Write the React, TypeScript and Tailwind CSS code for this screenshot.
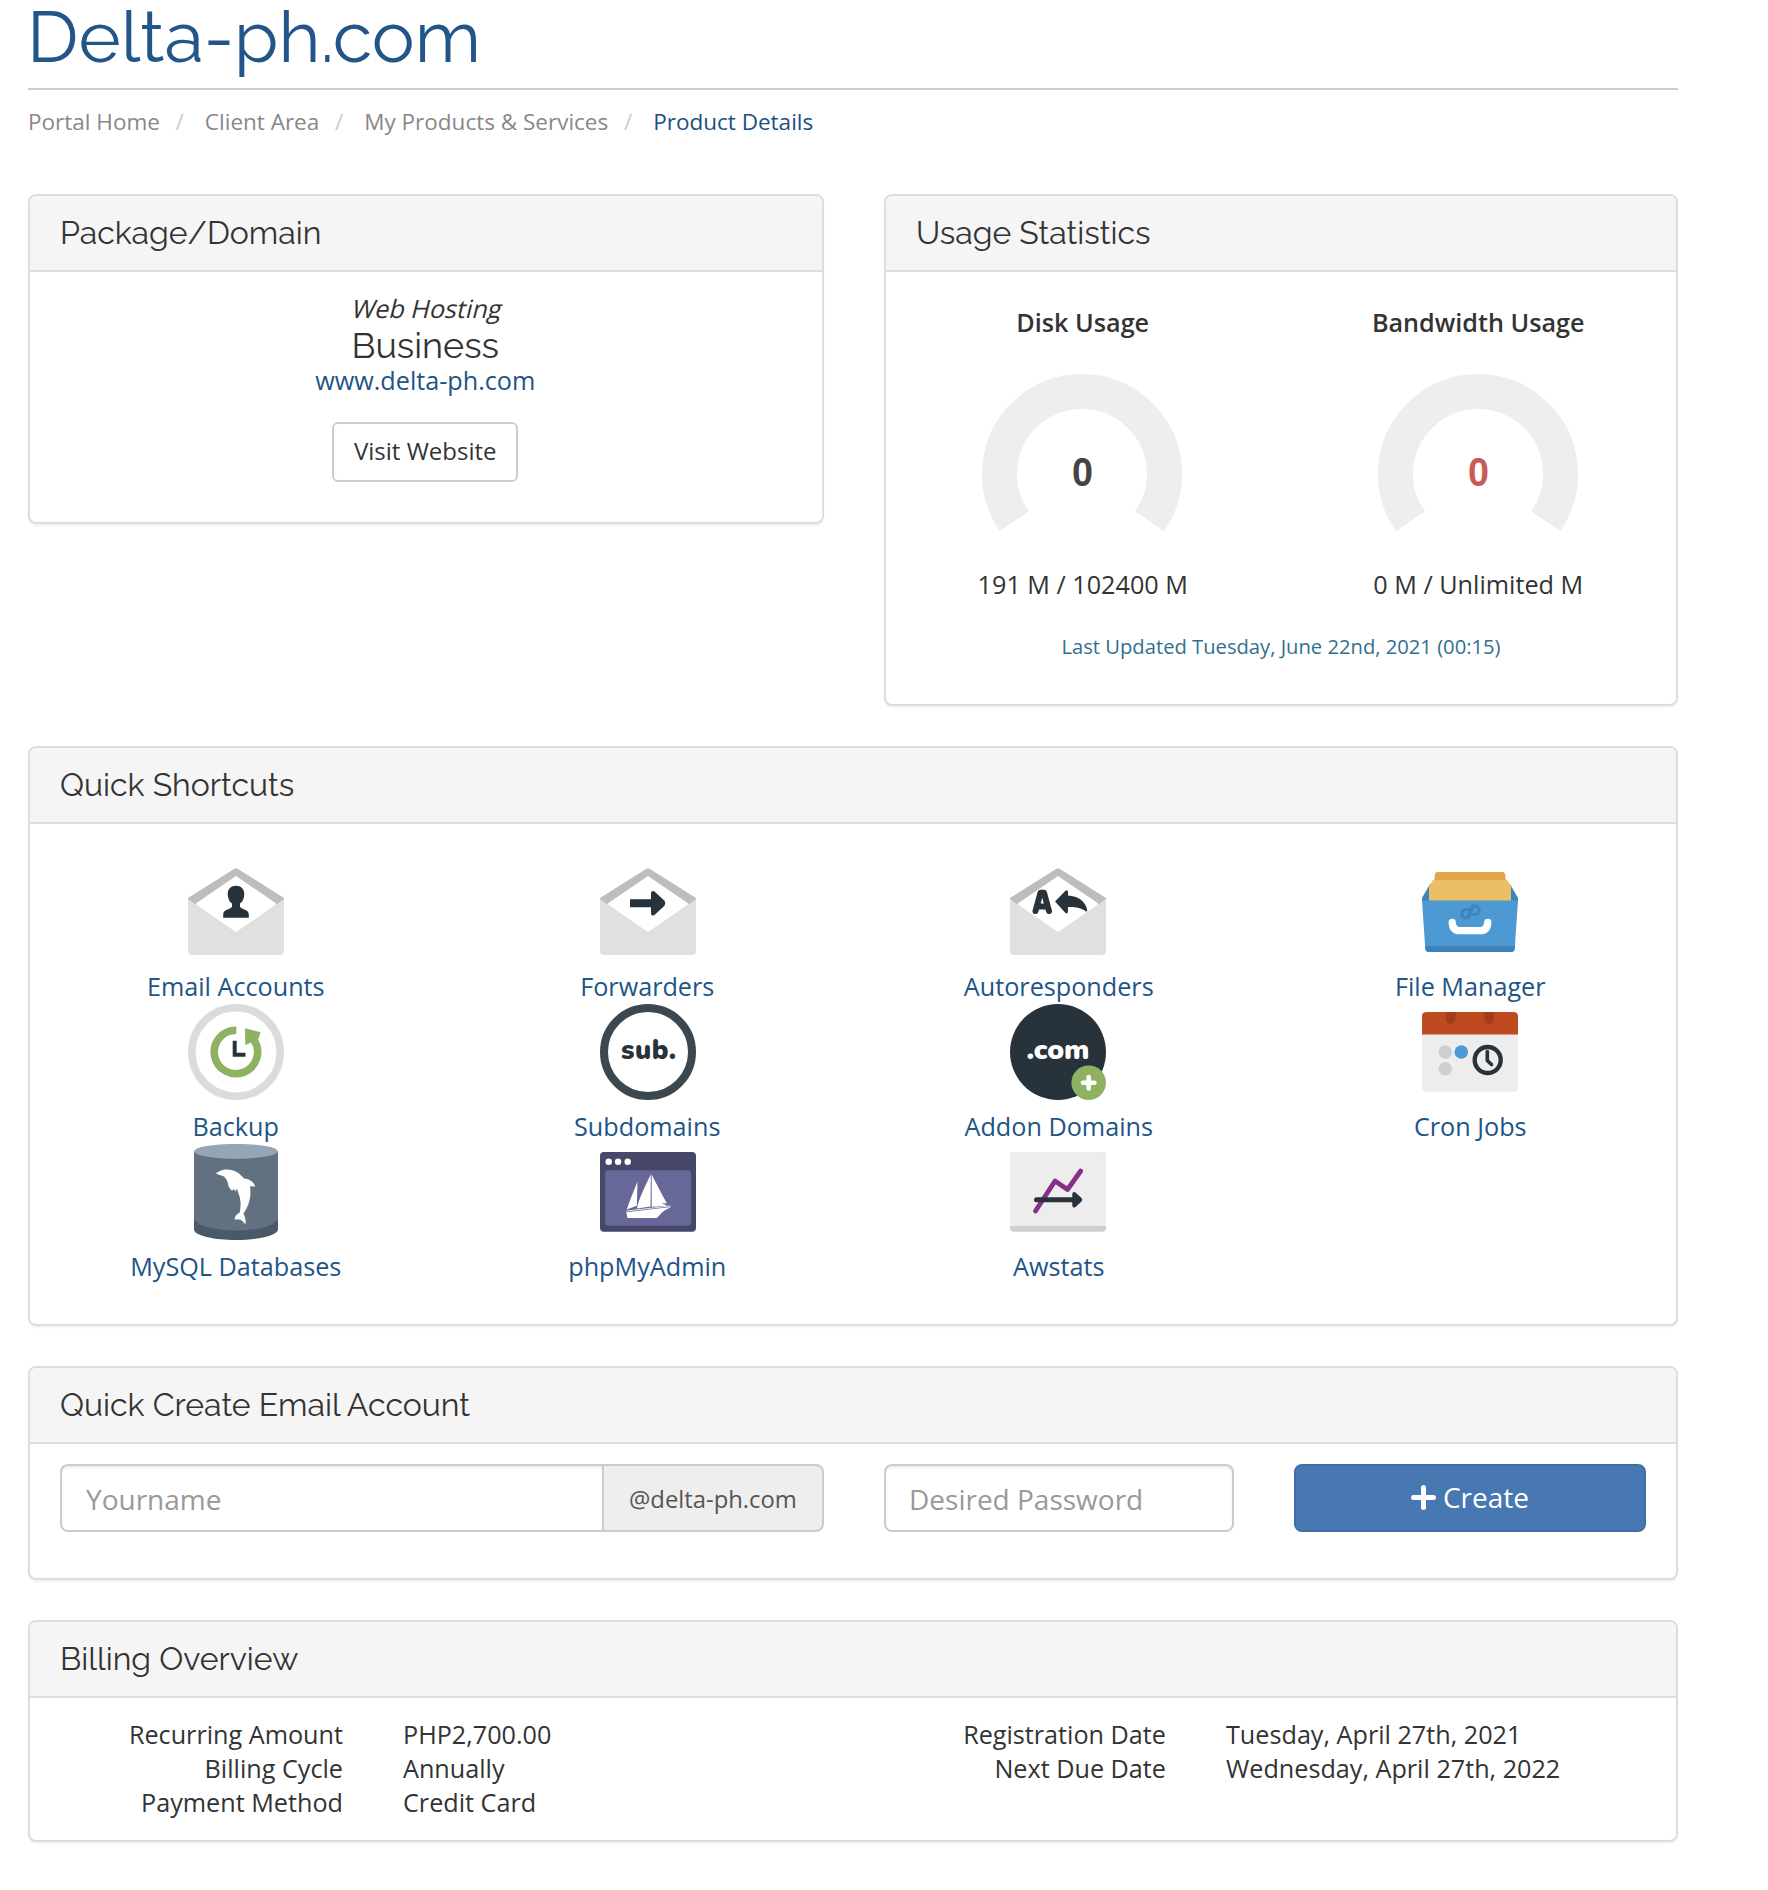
import type { ReactNode } from "react";

function Panel({ title, className, children }: { title: string; className: string; children: ReactNode }) {
  return (
    <section
      className={`rounded-[8px] border-2 border-[#dddddd] bg-white shadow-[0_2px_2px_rgba(0,0,0,0.05)] ${className}`}
    >
      <header className="h-[76px] rounded-t-[6px] border-b-2 border-[#dddddd] bg-[#f5f5f5] pl-[30px]">
        <h3 className="font-[Raleway,Lato,sans-serif] text-[32px] leading-[73px] text-[#333333]">{title}</h3>
      </header>
      {children}
    </section>
  );
}

function Gauge({ title, value, color, caption }: { title: string; value: string; color: string; caption: string }) {
  return (
    <div className="flex w-1/2 flex-col items-center">
      <h4 className="leading-[34px] font-semibold">{title}</h4>
      <svg className="mt-[35px] mb-[33px] -ml-px" width="200" height="160" viewBox="0 0 200 160">
        <path d="M32.4 147.3A82.5 82.5 0 1 1 167.6 147.3" fill="none" stroke="#eeeeee" strokeWidth="35" />
        <text
          x="100.5"
          y="112"
          textAnchor="middle"
          fontSize="41"
          fontWeight="700"
          fontFamily="'Liberation Sans', sans-serif"
          textLength="21"
          lengthAdjust="spacingAndGlyphs"
          fill={color}
        >
          {value}
        </text>
      </svg>
      <div className="leading-[34px]">{caption}</div>
    </div>
  );
}

function Icon({ children }: { children: ReactNode }) {
  return (
    <svg width="96" height="96" viewBox="0 0 96 96" className="block">
      {children}
    </svg>
  );
}

function Envelope({ children }: { children: ReactNode }) {
  return (
    <Icon>
      <path d="M0 37V34L46 5Q48 3.6 50 5L96 34V37L88 43H8Z" fill="#bdbdbd" />
      <path d="M48 12L89 40L48 69L7 40Z" fill="#ffffff" />
      <path d="M0 35L48 68L96 35V87Q96 91 92 91H4Q0 91 0 87Z" fill="#e0e0e0" />
      <path d="M0 34.5L7.5 40.5L9 37.5L4 32Z" fill="#bdbdbd" />
      <path d="M96 34.5L88.5 40.5L87 37.5L92 32Z" fill="#bdbdbd" />
      {children}
    </Icon>
  );
}

const DARK = "#27323b";
const ROUND_FONT = "Nunito, 'Open Sans', sans-serif";

const icons: Record<string, ReactNode> = {
  "Email Accounts": (
    <Envelope>
      <path
        d="M48 21.8C53 21.8 56.3 25 56.3 30C56.3 34 54.5 38 52 39.5V43C54 45.5 60.8 45.5 60.8 50.5V53.7H35.2V50.5C35.2 45.5 42 45.5 44 43V39.5C41.5 38 39.7 34 39.7 30C39.7 25 43 21.8 48 21.8Z"
        fill={DARK}
      />
    </Envelope>
  ),
  Forwarders: (
    <Envelope>
      <path
        d="M30 35.2H51V30Q51 26 54.5 27.5L64.5 36.8Q66.3 39.3 64.5 41.8L54.5 51Q51 52.8 51 49V43.3H30Z"
        fill={DARK}
      />
    </Envelope>
  ),
  Autoresponders: (
    <Envelope>
      <path
        d="M25.5 47L30.5 28.7H34L39 47M28.5 42.5H36"
        fill="none"
        stroke={DARK}
        strokeWidth="6"
        strokeLinecap="round"
        strokeLinejoin="round"
      />
      <path
        d="M45 37.5L55.5 26.7Q58 25.5 58 28.5V31.5C68 32 76 37.5 77.3 46.5Q76.5 48.5 74 46C69.5 43.3 64 43 58 43V47Q58 50.5 55.5 49Z"
        fill={DARK}
      />
    </Envelope>
  ),
  "File Manager": (
    <Icon>
      <path d="M8 20L0 34V38H96V34L88 20Z" fill="#3f83b9" />
      <path d="M12 17L13 10Q13.5 8 15.5 8H80.5Q82.5 8 83 10L84 17Z" fill="#e0a748" />
      <path d="M11 16H85L89 22V38H7V22Z" fill="#ebbf64" />
      <path d="M0 36.5H96L92.7 85Q92.3 88 89 88H7Q3.7 88 3.3 85Z" fill="#4c99d3" />
      <path d="M3 82H93L92.7 85Q92.3 88 89 88H7Q3.7 88 3.3 85Z" fill="#3f83bb" />
      <g fill="none" stroke="#3f85bc" strokeWidth="3" strokeLinecap="round">
        <path d="M46.5 45.5H43.5A4.3 4.3 0 0 0 43.5 54H46L48.5 45.5" />
        <path d="M48 50.5L50.5 42H53A4.2 4.2 0 0 1 53 50.5H51.5" />
      </g>
      <path
        d="M30.2 58.5C30.5 64 33 66.7 38 66.7H58C63 66.7 65.5 64 65.8 58.5"
        fill="none"
        stroke="#ffffff"
        strokeWidth="7.3"
        strokeLinecap="round"
      />
    </Icon>
  ),
  Backup: (
    <Icon>
      <circle cx="48" cy="48" r="44.2" fill="#ffffff" stroke="#dbdbdb" strokeWidth="7.6" />
      <path d="M48.3 26.3A21.7 21.7 0 1 0 66 36" fill="none" stroke="#8fb262" strokeWidth="7.6" />
      <path d="M57 24.3L72.5 28.2L70.5 35L57.3 41Z" fill="#8fb262" />
      <path d="M46.7 36.7V50.7H57.5" fill="none" stroke={DARK} strokeWidth="4" />
    </Icon>
  ),
  Subdomains: (
    <Icon>
      <circle cx="48" cy="48" r="44" fill="#ffffff" stroke="#3c4850" strokeWidth="8" />
      <text x="21" y="54.5" fontSize="27" fontWeight="900" fontFamily={ROUND_FONT} textLength="55" fill={DARK}>
        sub.
      </text>
    </Icon>
  ),
  "Addon Domains": (
    <Icon>
      <circle cx="48" cy="48" r="48" fill="#28323a" />
      <text
        x="16.5"
        y="54.5"
        fontSize="27"
        fontWeight="900"
        fontFamily={ROUND_FONT}
        textLength="63"
        lengthAdjust="spacingAndGlyphs"
        fill="#ffffff"
      >
        .com
      </text>
      <circle cx="78.7" cy="78.7" r="17.3" fill="#8fb262" />
      <path d="M78.7 73V84.4M73 78.7H84.4" stroke="#ffffff" strokeWidth="4.6" strokeLinecap="round" />
    </Icon>
  ),
  "Cron Jobs": (
    <Icon>
      <path d="M0 28H96V83.5Q96 87.7 92 87.7H4Q0 87.7 0 83.5Z" fill="#ededed" />
      <path d="M0 30.5V12Q0 8 5 8H91Q96 8 96 12V30.5Z" fill="#be4a20" />
      <path
        d="M24 8H33.5V15.5A4.75 4.75 0 0 1 24 15.5ZM62.5 8H72V15.5A4.75 4.75 0 0 1 62.5 15.5Z"
        fill="#a23c1b"
      />
      <circle cx="23.3" cy="48" r="6.7" fill="#cecece" />
      <circle cx="39.3" cy="48" r="6.8" fill="#4c99d3" />
      <circle cx="23.3" cy="64.7" r="6.7" fill="#cecece" />
      <circle cx="65.7" cy="56" r="13" fill="none" stroke={DARK} strokeWidth="4.4" />
      <path d="M65.3 47.5V56.5L69.5 60.5" fill="none" stroke={DARK} strokeWidth="3.6" strokeLinecap="round" />
    </Icon>
  ),
  "MySQL Databases": (
    <Icon>
      <path d="M6 7.3V86C8 92 26 96 48 96S88 92 90 86V7.3Z" fill="#4a5968" />
      <path d="M6 7.3V75C10 82.5 27 86.5 48 86.5S86 82.5 90 75V7.3Z" fill="#61717f" />
      <ellipse cx="48" cy="7.3" rx="42" ry="7.4" fill="#94a5b5" />
      <path
        d="M27.7 29.3L33 26.5C38 24.7 46 25.5 51 29.5L56.5 34.7C60 34.5 65.5 37 67.3 42.5L62 42.3C63 48 62.5 54 60.5 60C59 64 57 67 55.5 69.3C56.5 72 58.5 77 57.3 80.5C56 78.5 54.5 76.8 52 75.5L46.5 75.5C47 71.5 49.5 69.5 51.8 68.5C53 62 53 55 50.5 49.5L48.8 44.5L47.5 47.5L46 45L44 46.7C42 45 39.8 42 40 39.5C39 36 37.5 33.5 35.5 32.3L31 30.7Z"
        fill="#ffffff"
      />
    </Icon>
  ),
  phpMyAdmin: (
    <Icon>
      <rect y="8" width="96" height="79.7" rx="4" fill="#474769" />
      <rect x="5.2" y="26.3" width="86" height="55.5" rx="4" fill="#686898" />
      <circle cx="8.7" cy="17.7" r="3.2" fill="#ffffff" />
      <circle cx="18.1" cy="17.7" r="3.2" fill="#ffffff" />
      <circle cx="27.7" cy="17.7" r="3.2" fill="#ffffff" />
      <path d="M37.5 37.5L36.8 61.7L26.7 65.5Q30 56 37.5 37.5Z" fill="#ffffff" />
      <path d="M50.8 30.5L50.5 62.5L37 64.5Q38 56 50.8 30.5Z" fill="#ffffff" />
      <path d="M51.7 30.5Q60 47 67 59.5L62 59L67 62L51.7 62.7Z" fill="#ffffff" />
      <path d="M26.3 68.3L71 63Q63 67 61.5 69L57 74H27.5Z" fill="#ffffff" />
      <path d="M26.3 67L70.5 62" stroke="#ffffff" strokeWidth="0.8" />
    </Icon>
  ),
  Awstats: (
    <Icon>
      <rect y="8" width="96" height="79.7" rx="4" fill="#cfcfcf" />
      <path d="M0 82V12Q0 8 4 8H92Q96 8 96 12V82Z" fill="#ededed" />
      <path
        d="M25.5 67L45 37L57.5 45.5L70.7 27"
        fill="none"
        stroke="#85318a"
        strokeWidth="4.8"
        strokeLinejoin="round"
        strokeLinecap="round"
      />
      <path d="M26.5 55.7H65" stroke={DARK} strokeWidth="5" strokeLinecap="round" />
      <path
        d="M62.3 50Q62.5 47 65.5 48.5L71.5 54Q73 55.7 71.5 57.5L65.5 63Q62.5 64.5 62.3 61.5Z"
        fill={DARK}
      />
    </Icon>
  ),
};

const crumbs = ["Portal Home", "Client Area", "My Products & Services"];

const billing = [
  [
    ["Recurring Amount", "PHP2,700.00"],
    ["Billing Cycle", "Annually"],
    ["Payment Method", "Credit Card"],
  ],
  [
    ["Registration Date", "Tuesday, April 27th, 2021"],
    ["Next Due Date", "Wednesday, April 27th, 2022"],
  ],
];

export default function App() {
  return (
    <div className="min-h-[1890px] bg-white font-['Open_Sans',sans-serif] text-[25.2px] text-[#333333]">
      <div className="ml-[28px] w-[1650px]">
        <h1 className="-ml-px h-[88px] font-[Raleway,Lato,sans-serif] text-[72px] leading-[74px] text-[#235688]">
          Delta-ph.com
        </h1>
        <div className="h-[2px] bg-[#cccccc]" />
        <nav className="flex h-[104px] pt-[12px] text-[22.5px] leading-[40px] text-[#888888]">
          {crumbs.map((crumb) => (
            <div key={crumb} className="flex">
              <a>{crumb}</a>
              <span className="mr-[21px] ml-[15.7px] text-[#cccccc]">/</span>
            </div>
          ))}
          <a className="text-[#1d4f80]">Product Details</a>
        </nav>

        <div className="flex items-start justify-between">
          <Panel title="Package/Domain" className="h-[330px] w-[795.5px]">
            <div className="mr-px flex flex-col items-center pt-[19px]">
              <div className="ml-[5px] -skew-x-[14deg] leading-[34px]">Web Hosting</div>
              <div className="font-[Raleway,Lato,sans-serif] text-[36px] leading-[41px]">Business</div>
              <a className="-mt-[3px] leading-[34px] text-[#215487]">www.delta-ph.com</a>
              <button className="mt-[25px] h-[60px] w-[186px] rounded-[6px] border-2 border-[#cccccc] bg-white pb-[2px] text-[24px] leading-[54px]">
                Visit Website
              </button>
            </div>
          </Panel>

          <Panel title="Usage Statistics" className="h-[512px] w-[794px]">
            <div className="-ml-px flex pt-[33px]">
              <Gauge title="Disk Usage" value="0" color="#444444" caption="191 M / 102400 M" />
              <Gauge title="Bandwidth Usage" value="0" color="#cb5a54" caption="0 M / Unlimited M" />
            </div>
            <p className="mt-[28px] text-center text-[20.2px] leading-[34px] text-[#31708f]">
              Last Updated Tuesday, June 22nd, 2021 (00:15)
            </p>
          </Panel>
        </div>

        <Panel title="Quick Shortcuts" className="mt-[40px] h-[580px]">
          <div className="grid grid-cols-4 pt-[40px]">
            {Object.entries(icons).map(([label, icon]) => (
              <a
                key={label}
                className="flex h-[140px] flex-col items-center text-[#215487] [&:nth-child(4n+2)>svg]:translate-x-px [&:nth-child(4n+3)>svg]:-translate-x-px"
              >
                {icon}
                <span className="pt-[9px] leading-[34px]">{label}</span>
              </a>
            ))}
          </div>
        </Panel>

        <Panel title="Quick Create Email Account" className="mt-[40px] h-[214px]">
          <div className="flex px-[30px] pt-[20px]">
            <div className="flex h-[68px] w-[763.5px]">
              <input
                placeholder="Yourname"
                className="w-[542px] rounded-l-[8px] border-2 border-r-0 border-[#cccccc] bg-white px-[24px] pt-[1px] text-[28px] shadow-[inset_0_2px_2px_rgba(0,0,0,0.075)] placeholder:text-[#999999]"
              />
              <span className="flex-1 rounded-r-[8px] border-2 border-[#cccccc] bg-[#eeeeee] pl-[25px] text-[23.8px] leading-[66px] text-[#555555]">
                @delta-ph.com
              </span>
            </div>
            <input
              placeholder="Desired Password"
              className="ml-[60.5px] h-[68px] w-[350px] rounded-[8px] border-2 border-[#cccccc] bg-white px-[23px] pt-[1px] text-[28px] shadow-[inset_0_2px_2px_rgba(0,0,0,0.075)] placeholder:text-[#999999]"
            />
            <button className="ml-auto flex h-[68px] w-[352px] items-center justify-center gap-[7px] rounded-[8px] border-2 border-[#3f6ea6] bg-[#4878b2] pb-[2px] text-[28px] text-white">
              <svg width="25" height="25" viewBox="0 0 25 25">
                <path d="M12.5 2.5V22.5M2.5 12.5H22.5" stroke="currentColor" strokeWidth="5" strokeLinecap="round" />
              </svg>
              <span className="-mt-px">Create</span>
            </button>
          </div>
        </Panel>

        <Panel title="Billing Overview" className="mt-[40px] h-[222px]">
          <div className="grid grid-cols-2 pt-[19px] leading-[34px]">
            {billing.map((rows, column) => (
              <dl key={column}>
                {rows.map(([term, detail]) => (
                  <div key={term} className="flex gap-[60px]">
                    <dt className="w-[313px] text-right">{term}</dt>
                    <dd>{detail}</dd>
                  </div>
                ))}
              </dl>
            ))}
          </div>
        </Panel>
      </div>
    </div>
  );
}
